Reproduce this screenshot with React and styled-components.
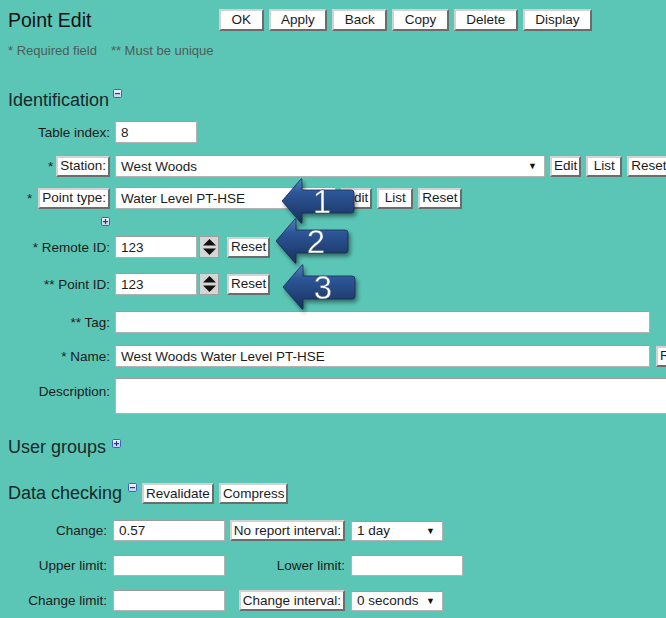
import React from 'react';
import styled, { createGlobalStyle } from 'styled-components';

const GlobalStyle = createGlobalStyle`
  html, body {
    margin: 0;
    padding: 0;
    overflow: hidden;
    background: #5cc6b6;
  }
  body {
    font-family: "Liberation Sans", Arial, sans-serif;
    color: #1b1b1b;
  }
`;

const Page = styled.div`
  position: relative;
  width: 720px;
  height: 618px;
  padding: 9px 0 0 8px;
  box-sizing: border-box;
`;

const Header = styled.div`
  display: flex;
  align-items: center;
  height: 22px;
`;

const Title = styled.h1`
  margin: 0;
  width: 211px;
  font-size: 19.5px;
  font-weight: normal;
  line-height: 22px;
  color: #111;
`;

const ButtonBar = styled.div`
  display: flex;
  gap: ${p => p.$gap || 5}px;
  margin-top: ${p => p.$mt || 0}px;
`;

const Button = styled.button`
  box-sizing: border-box;
  height: ${p => p.$h || 21}px;
  min-width: ${p => p.$w || 0}px;
  padding: 0 ${p => (p.$pad !== undefined ? p.$pad : 2)}px;
  margin: 0;
  background: #fff;
  color: #1b1b1b;
  font-family: "Liberation Sans", Arial, sans-serif;
  font-size: 13.5px;
  line-height: 1;
  white-space: nowrap;
  border: 2px solid;
  border-color: #d2d2d2 #6c6c6c #6c6c6c #d2d2d2;
  cursor: pointer;
  flex-shrink: 0;
  justify-self: ${p => p.$end ? 'end' : 'start'};
`;

const Note = styled.div`
  margin-top: 12px;
  font-size: 13px;
  line-height: 15px;
  color: #4b5d59;
  span + span {
    margin-left: 14px;
  }
`;

const SectionHead = styled.div`
  display: flex;
  align-items: flex-start;
  margin-top: ${p => p.$mt || 0}px;
`;

const HeadText = styled.h2`
  margin: 0;
  font-size: 18px;
  font-weight: normal;
  line-height: 22px;
  color: #15292a;
`;

const ToggleIcon = styled.svg`
  display: block;
  width: 9px;
  height: 9px;
  margin-left: ${p => p.$ml || 5}px;
  margin-top: ${p => p.$mt || 0}px;
  margin-right: ${p => p.$mr || 0}px;
  flex-shrink: 0;
`;

function Toggle({ plus, ...rest }) {
  return (
    <ToggleIcon viewBox="0 0 9 9" {...rest}>
      <defs>
        <linearGradient id={plus ? 'tgp' : 'tgm'} x1="0" y1="0" x2="0" y2="1">
          <stop offset="0" stopColor="#f4f7ff" />
          <stop offset="1" stopColor="#c3d2f1" />
        </linearGradient>
      </defs>
      <rect x="0.5" y="0.5" width="8" height="8" rx="1.2" fill={`url(#${plus ? 'tgp' : 'tgm'})`} stroke="#3b5fc6" />
      <rect x="2" y="4" width="5" height="1.2" fill="#1d3a9e" />
      {plus && <rect x="3.9" y="2" width="1.2" height="5" fill="#1d3a9e" />}
    </ToggleIcon>
  );
}

const Row = styled.div`
  display: flex;
  align-items: ${p => p.$top ? 'flex-start' : 'center'};
  margin-top: ${p => p.$mt || 0}px;
  height: ${p => p.$h || 22}px;
`;

const LabelCell = styled.div`
  width: 102px;
  margin-right: 5px;
  flex-shrink: 0;
  display: flex;
  justify-content: flex-end;
  align-items: center;
  font-size: 13.5px;
  white-space: nowrap;
  padding-top: ${p => p.$pt || 0}px;
`;

const Star = styled.span`
  margin-right: ${p => p.$gap || 4}px;
`;

const TextInput = styled.input`
  box-sizing: border-box;
  width: ${p => p.$w}px;
  height: ${p => p.$h || 22}px;
  margin: 0 ${p => p.$mr || 0}px 0 0;
  padding: 0 5px;
  background: #fff;
  border: 1px solid #b2b2b2;
  border-top-color: #9c9c9c;
  font-family: "Liberation Sans", Arial, sans-serif;
  font-size: 13.5px;
  color: #1b1b1b;
  outline: none;
  flex-shrink: 0;
`;

const TextArea = styled.textarea`
  box-sizing: border-box;
  width: 580px;
  height: 36px;
  margin: 0;
  padding: 3px 5px;
  background: #fff;
  border: 1px solid #b2b2b2;
  border-top-color: #9c9c9c;
  resize: none;
  font-family: "Liberation Sans", Arial, sans-serif;
  font-size: 13.5px;
  outline: none;
  flex-shrink: 0;
`;

const SelectBox = styled.div`
  box-sizing: border-box;
  width: ${p => p.$w}px;
  height: ${p => p.$h || 22}px;
  margin-right: ${p => p.$mr || 0}px;
  display: flex;
  align-items: center;
  padding: 0 7px 0 5px;
  background: #fff;
  border: 1px solid #b2b2b2;
  border-top-color: #9c9c9c;
  font-size: 13.5px;
  flex-shrink: 0;
  span:first-child {
    flex: 1;
  }
`;

const Caret = styled.span`
  font-size: 9px;
  color: #111;
`;

const Spinner = styled.div`
  box-sizing: border-box;
  width: 20px;
  height: 22px;
  margin: 0 8px 0 2px;
  background: #d5d5d5;
  border: 1px solid #9e9e9e;
  display: flex;
  align-items: center;
  justify-content: center;
  flex-shrink: 0;
`;

const Fields = styled.div`
  display: flex;
  align-items: center;
  gap: ${p => p.$gap || 5}px;
`;

const DataGrid = styled.div`
  display: grid;
  grid-template-columns: 99px 112px 114px auto;
  grid-auto-rows: 21px;
  column-gap: 6px;
  row-gap: 14px;
  align-items: center;
  margin-top: 16px;
`;

const GridLabel = styled.div`
  font-size: 13.5px;
  text-align: right;
  white-space: nowrap;
`;

const ArrowWrap = styled.svg`
  position: absolute;
  left: ${p => p.$x}px;
  top: ${p => p.$y}px;
  width: 78px;
  height: 50px;
  overflow: visible;
  filter: drop-shadow(2px 3px 2px rgba(0, 0, 0, 0.45));
`;

function Arrow({ x, y, n }) {
  return (
    <ArrowWrap $x={x} $y={y} viewBox="0 0 78 50">
      <defs>
        <linearGradient id={`ag${n}`} x1="0" y1="0" x2="0" y2="1">
          <stop offset="0" stopColor="#5683c4" />
          <stop offset="0.3" stopColor="#2d5798" />
          <stop offset="1" stopColor="#17315d" />
        </linearGradient>
      </defs>
      <path
        d="M2 24 L21 2 Q22 1 22 3 L22 13 L71 13 Q74 13 74 16 L74 33 Q74 36 71 36 L22 36 L22 45 Q22 47 21 46 Z"
        fill={`url(#ag${n})`}
        stroke="#142b52"
        strokeWidth="0.8"
      />
      <text
        x="42"
        y="36"
        textAnchor="middle"
        fontSize="33"
        fontFamily='"Liberation Sans", Arial, sans-serif'
        fill="#fff"
        stroke="#3a4f70"
        strokeWidth="0.4"
      >
        {n}
      </text>
    </ArrowWrap>
  );
}

function Updown() {
  return (
    <svg width="13" height="16" viewBox="0 0 13 16">
      <polygon points="0,6.5 6.5,0 13,6.5" fill="#111" />
      <polygon points="0,9.5 6.5,16 13,9.5" fill="#111" />
    </svg>
  );
}

export default function App() {
  return (
    <Page>
      <GlobalStyle />
      <Header>
        <Title>Point Edit</Title>
        <ButtonBar>
          <Button $h={22} $pad={10.5}>OK</Button>
          <Button $h={22} $pad={10.5}>Apply</Button>
          <Button $h={22} $pad={10.5}>Back</Button>
          <Button $h={22} $pad={10.5}>Copy</Button>
          <Button $h={22} $pad={10.5}>Delete</Button>
          <Button $h={22} $pad={10.5}>Display</Button>
        </ButtonBar>
      </Header>

      <Note>
        <span>* Required field</span>
        <span>** Must be unique</span>
      </Note>

      <SectionHead $mt={31}>
        <HeadText>Identification</HeadText>
        <Toggle $ml={4} />
      </SectionHead>

      <Row $mt={10}>
        <LabelCell>Table index:</LabelCell>
        <TextInput $w={82} $h={22} defaultValue="8" />
      </Row>

      <Row $mt={12}>
        <LabelCell>
          <Star $gap={3}>*</Star>
          <Button>Station:</Button>
        </LabelCell>
        <SelectBox $w={430} $mr={5}>
          <span>West Woods</span>
          <Caret>▼</Caret>
        </SelectBox>
        <Fields>
          <Button>Edit</Button>
          <Button $w={36}>List</Button>
          <Button>Reset</Button>
        </Fields>
      </Row>

      <Row $mt={10}>
        <LabelCell>
          <Star $gap={6}>*</Star>
          <Button>Point type:</Button>
        </LabelCell>
        <TextInput $w={221} $mr={5} defaultValue="Water Level PT-HSE" />
        <Fields>
          <Button>Edit</Button>
          <Button $w={36}>List</Button>
          <Button>Reset</Button>
        </Fields>
      </Row>

      <Row $mt={8} $h={9}>
        <LabelCell>
          <Toggle plus $ml={0} />
        </LabelCell>
      </Row>

      <Row $mt={10}>
        <LabelCell>* Remote ID:</LabelCell>
        <TextInput $w={82} defaultValue="123" />
        <Spinner><Updown /></Spinner>
        <Button>Reset</Button>
      </Row>

      <Row $mt={15}>
        <LabelCell>** Point ID:</LabelCell>
        <TextInput $w={82} defaultValue="123" />
        <Spinner><Updown /></Spinner>
        <Button>Reset</Button>
      </Row>

      <Row $mt={16}>
        <LabelCell>** Tag:</LabelCell>
        <TextInput $w={535} defaultValue="" />
      </Row>

      <Row $mt={12}>
        <LabelCell>* Name:</LabelCell>
        <TextInput $w={535} $mr={6} defaultValue="West Woods Water Level PT-HSE" />
        <Button>Reset</Button>
      </Row>

      <Row $mt={11} $top $h={36}>
        <LabelCell $pt={6}>Description:</LabelCell>
        <TextArea defaultValue="" />
      </Row>

      <SectionHead $mt={22}>
        <HeadText>User groups</HeadText>
        <Toggle plus $ml={6} $mt={3} />
      </SectionHead>

      <SectionHead $mt={24}>
        <HeadText>Data checking</HeadText>
        <Toggle $ml={6} $mt={1} $mr={5} />
        <ButtonBar $mt={1}>
          <Button>Revalidate</Button>
          <Button>Compress</Button>
        </ButtonBar>
      </SectionHead>

      <DataGrid>
        <GridLabel>Change:</GridLabel>
        <TextInput $w={112} $h={21} defaultValue="0.57" />
        <Button $end>No report interval:</Button>
        <SelectBox $w={92} $h={20}>
          <span>1 day</span>
          <Caret>▼</Caret>
        </SelectBox>

        <GridLabel>Upper limit:</GridLabel>
        <TextInput $w={112} $h={21} defaultValue="" />
        <GridLabel>Lower limit:</GridLabel>
        <TextInput $w={112} $h={21} defaultValue="" />

        <GridLabel>Change limit:</GridLabel>
        <TextInput $w={112} $h={21} defaultValue="" />
        <Button $end>Change interval:</Button>
        <SelectBox $w={92} $h={20}>
          <span>0 seconds</span>
          <Caret>▼</Caret>
        </SelectBox>
      </DataGrid>

      <Arrow x={280} y={177} n={1} />
      <Arrow x={274} y={217} n={2} />
      <Arrow x={281} y={263} n={3} />
    </Page>
  );
}
